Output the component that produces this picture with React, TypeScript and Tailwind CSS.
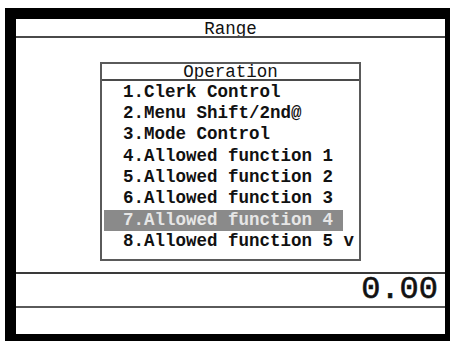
import React from 'react';

const items = [
    '1.Clerk Control',
    '2.Menu Shift/2nd@',
    '3.Mode Control',
    '4.Allowed function 1',
    '5.Allowed function 2',
    '6.Allowed function 3',
    '7.Allowed function 4',
    '8.Allowed function 5 v',
];

const mono = "font-['Liberation_Mono','DejaVu_Sans_Mono',monospace]";

const App: React.FC = () => {
    const selected = 6;

    return (
        <div className="w-[450px] h-[341px] overflow-hidden bg-white">
            <div className={`ml-[5px] mt-[8px] w-[451px] h-[337px] border-[11px] border-black flex flex-col text-[#111] ${mono}`}>
                {/* title */}
                <div className="h-[17px] pt-[2px] text-center text-[17.5px] leading-[17px]">Range</div>
                <div className="h-[2px] bg-[#4a4a4a]" />

                {/* menu area */}
                <div className="h-[234px] pt-[24px] pl-[84px]">
                    <div className="w-[261px] h-[199px] border-2 border-[#5a5a5a] flex flex-col">
                        <div className="h-[15px] pt-[1px] text-center text-[17.5px] leading-[15px]">Operation</div>
                        <div className="h-[2px] bg-[#4a4a4a]" />
                        <ul className="mt-[0.5px]">
                            {items.map((label, i) => (
                                <li
                                    key={label}
                                    className={
                                        i === selected
                                            ? 'ml-[2px] w-[239px] h-[21.4px] pl-[19px] bg-[#8a8a8a] text-[#e6e6e6] font-bold text-[17.5px] leading-[21.4px] whitespace-pre'
                                            : 'h-[21.4px] pl-[21px] font-bold text-[17.5px] leading-[21.4px] whitespace-pre'
                                    }
                                >
                                    {label}
                                </li>
                            ))}
                        </ul>
                    </div>
                </div>
                <div className="h-[2px] bg-[#3a3a3a]" />

                {/* amount */}
                <div className="h-[32px] flex items-center justify-end pr-[7px] text-[32px] leading-none [-webkit-text-stroke:0.6px_#111]">0.00</div>
                <div className="h-[2px] bg-[#5a5a5a]" />

                <div className="flex-1" />
            </div>
        </div>
    );
};

export default App;
